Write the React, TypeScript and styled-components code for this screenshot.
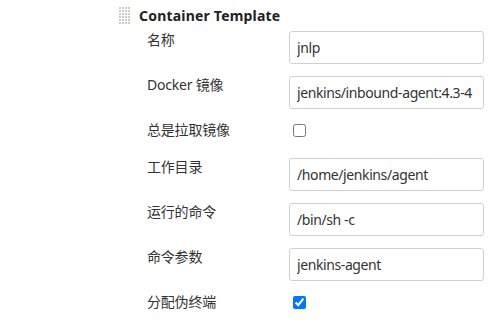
import React from "react";
import styled, { createGlobalStyle } from "styled-components";

interface IField {
  label: string;
  value?: string;
  checked?: boolean;
  kind: "text" | "check";
}

const fields: IField[] = [
  { label: "名称", value: "jnlp", kind: "text" },
  { label: "Docker 镜像", value: "jenkins/inbound-agent:4.3-4", kind: "text" },
  { label: "总是拉取镜像", checked: false, kind: "check" },
  { label: "工作目录", value: "/home/jenkins/agent", kind: "text" },
  { label: "运行的命令", value: "/bin/sh -c", kind: "text" },
  { label: "命令参数", value: "jenkins-agent", kind: "text" },
  { label: "分配伪终端", checked: true, kind: "check" },
];

const GlobalStyle = createGlobalStyle`
  body {
    margin: 0;
    background: #fff;
    font-family: "Noto Sans", "Noto Sans CJK SC", sans-serif;
    color: #333;
  }
`;

const Page = styled.div`
  padding: 7px 0 0 119px;
  width: 492px;
  height: 323px;
  box-sizing: border-box;
  overflow: hidden;
`;

const Header = styled.div`
  display: flex;
  align-items: center;
  gap: 8px;
  height: 18px;
  margin-bottom: 6px;
`;

const Title = styled.h3`
  margin: 0;
  font-size: 14px;
  font-weight: 700;
  line-height: 18px;
  color: #222;
  letter-spacing: 0.2px;
`;

const Fields = styled.div`
  display: flex;
  flex-direction: column;
  gap: 12px;
  margin-left: 28px;
`;

const Row = styled.div<{ $check: boolean }>`
  display: grid;
  grid-template-columns: 142px 195px;
  height: ${(p) => (p.$check ? "25px" : "33px")};
`;

const Label = styled.label`
  font-size: 14px;
  line-height: 18px;
  color: #333;
  white-space: nowrap;
  letter-spacing: -0.2px;
`;

const TextInput = styled.input`
  box-sizing: border-box;
  width: 195px;
  height: 33px;
  border: 1px solid #d0d0d0;
  border-radius: 3px;
  padding: 0 7px;
  font-family: "Noto Sans", "Noto Sans CJK SC", sans-serif;
  font-size: 14px;
  letter-spacing: -0.4px;
  color: #333;
  background: #fff;
  outline: none;
`;

const Check = styled.input`
  width: 13px;
  height: 13px;
  margin: 3px 0 0 4px;
`;

const Grip = () => (
  <svg width="12" height="18" viewBox="0 0 12 18">
    {[0, 1, 2, 3, 4, 5].map((r) =>
      [0, 1, 2, 3].map((c) => (
        <rect
          key={`${r}-${c}`}
          x={c * 3}
          y={r * 3}
          width="2"
          height="2"
          fill="#cccccc"
        />
      ))
    )}
  </svg>
);

export default function App() {
  return (
    <>
      <GlobalStyle />
      <Page>
        <Header>
          <Grip />
          <Title>Container Template</Title>
        </Header>
        <Fields>
          {fields.map((f) => (
            <Row key={f.label} $check={f.kind === "check"}>
              <Label>{f.label}</Label>
              {f.kind === "text" ? (
                <TextInput defaultValue={f.value} />
              ) : (
                <Check type="checkbox" defaultChecked={f.checked} />
              )}
            </Row>
          ))}
        </Fields>
      </Page>
    </>
  );
}
